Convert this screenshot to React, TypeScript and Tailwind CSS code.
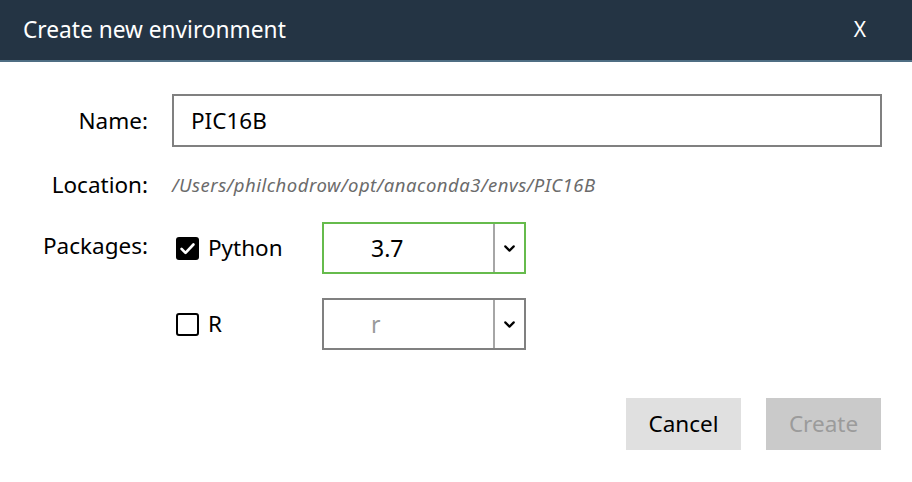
import { ChevronDown } from "lucide-react";

const FONT = "font-['Noto_Sans','Open_Sans',sans-serif]";

function CheckBox({ checked }: { checked: boolean }) {
  if (checked) {
    return (
      <span className="flex h-[23px] w-[23px] items-center justify-center rounded-[3px] bg-black">
        <svg viewBox="0 0 24 24" className="h-[19px] w-[19px]" fill="none" stroke="white" strokeWidth={3.4} strokeLinecap="round" strokeLinejoin="round">
          <path d="M4.5 12.5l5 5L19.5 7" />
        </svg>
      </span>
    );
  }
  return <span className="block h-[23px] w-[23px] rounded-[3px] border-2 border-black" />;
}

function Select({ value, active }: { value: string; active: boolean }) {
  return (
    <div
      className={`flex h-[52px] w-[204px] border-2 ${active ? "border-[#66bb4c]" : "border-[#808080]"}`}
    >
      <div className={`flex flex-1 items-center pl-[47px] text-[23px] ${active ? "text-black" : "text-[#9a9a9a]"}`}>
        {value}
      </div>
      <div className="flex w-[31px] items-center justify-center border-l-2 border-[#a6a6a6]">
        <ChevronDown size={17} strokeWidth={3} className="text-black" />
      </div>
    </div>
  );
}

export default function App() {
  return (
    <div className={`h-[482px] w-[912px] overflow-hidden bg-white ${FONT}`}>
      {/* Title bar */}
      <div className="flex h-[62px] items-center justify-between border-b-2 border-[#4f6e83] bg-[#243444] pl-[23px] pr-[46px] text-white">
        <span className="text-[22.7px]">Create new environment</span>
        <span className="text-[21px]">X</span>
      </div>

      <div className="grid grid-cols-[148px_1fr] gap-x-[24px] pr-[30px] pt-[32px] text-[22.5px] text-black">
        <div className="flex items-center justify-end">Name:</div>
        <div className="flex h-[53px] items-center border-2 border-[#808080] pl-[17px]">PIC16B</div>

        <div className="mt-[23px] flex h-[30px] items-center justify-end">Location:</div>
        <div className="mt-[23px] flex h-[30px] items-center text-[18.5px] italic tracking-[0.5px] text-[#6b6b6b]">
          /Users/philchodrow/opt/anaconda3/envs/PIC16B
        </div>

        <div className="mt-[22px] flex items-start justify-end pt-[7px]">Packages:</div>
        <div className="mt-[22px] flex flex-col gap-[24px]">
          <div className="flex items-center">
            <span className="ml-[4px]"><CheckBox checked /></span>
            <span className="ml-[9px] w-[114px]">Python</span>
            <Select value="3.7" active />
          </div>
          <div className="flex items-center">
            <span className="ml-[4px]"><CheckBox checked={false} /></span>
            <span className="ml-[9px] w-[114px]">R</span>
            <Select value="r" active={false} />
          </div>
        </div>
      </div>

      <div className="mt-[48px] flex justify-end gap-[25px] pr-[31px]">
        <button className="h-[52px] w-[115px] bg-[#e0e0e0] text-[22.5px] text-black">Cancel</button>
        <button className="h-[52px] w-[115px] bg-[#cacaca] text-[22.5px] text-[#9b9b9b]">Create</button>
      </div>
    </div>
  );
}
